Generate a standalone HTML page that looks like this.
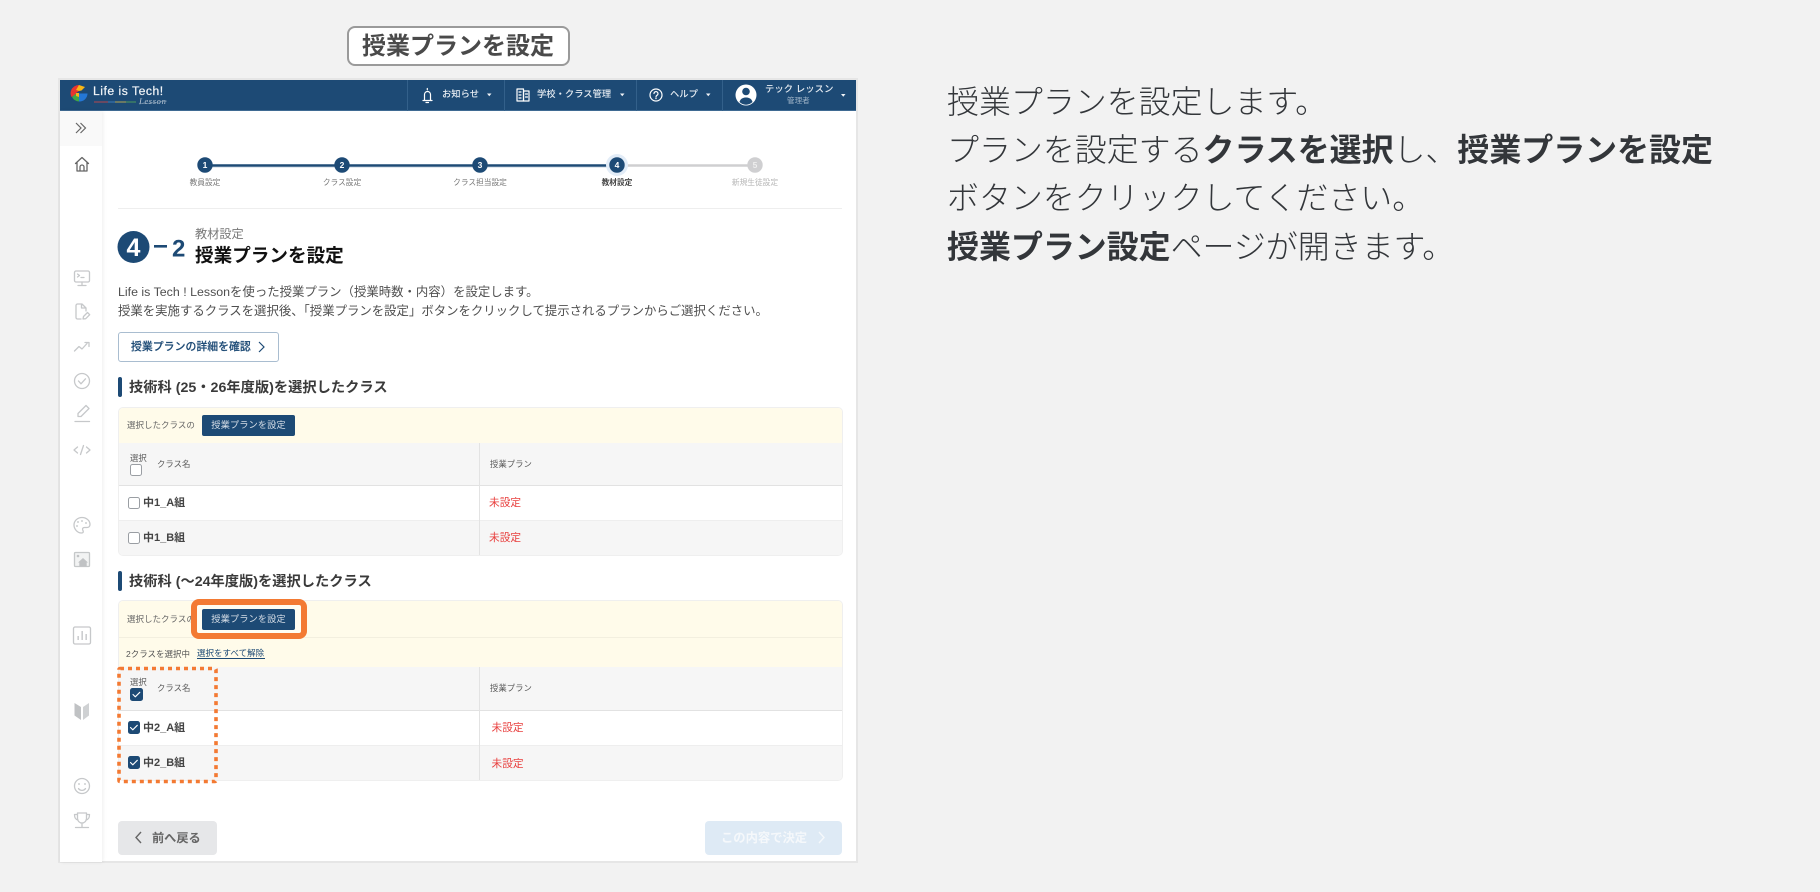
<!DOCTYPE html>
<html lang="ja"><head><meta charset="utf-8"><title>授業プランを設定</title>
<style>
*{box-sizing:border-box}
html,body{margin:0;padding:0}
body{width:1820px;height:892px;position:relative;overflow:hidden;background:#f2f2f2;font-family:"Liberation Sans","Noto Sans CJK JP",sans-serif;color:#333}
.t{position:absolute;white-space:nowrap;line-height:20px;height:20px}
.b{position:absolute}
b{font-weight:700}
.hd{color:#e6ecf2;font-size:9.3px;font-weight:500}
.step{font-size:7.7px;color:#777;transform:translateX(-50%)}
.th{font-size:8.4px;color:#5c5c5c}
.red{font-size:10.7px;color:#e8403f}
.row{font-size:11px;font-weight:700;color:#444}
.btn{position:absolute;background:#1d4a75;border-radius:2px;color:#d5dde6;font-size:9.3px;text-align:center;line-height:21px;white-space:nowrap}
.cb{position:absolute;width:12px;height:12px;border:1px solid #9a9ea3;border-radius:2.5px;background:#fff}
.cbc{position:absolute;width:12.5px;height:12.5px;border-radius:2.5px;background:#1d4a75}
.sec{font-size:14.25px;font-weight:700;color:#3a3a3a}
.bar{position:absolute;left:118px;width:4px;height:20px;background:#1d4a75;border-radius:2px}
.msg{left:947px;font-size:31.95px;font-weight:300;color:#33363a;line-height:48px;height:48px}
.msg b{font-weight:700}
</style></head><body>

<!-- pill -->
<div class="b" style="left:347px;top:26px;width:223px;height:40px;background:#fff;border:2px solid #9a9a9a;border-radius:8px"></div>
<div class="t" style="left:362px;top:37px;font-size:24px;font-weight:700;color:#4a4a4a">授業プランを設定</div>

<!-- right text -->
<div class="t msg" style="top:78px">授業プランを設定します。</div>
<div class="t msg" style="top:126px">プランを設定する<b>クラスを選択</b>し、<b>授業プランを設定</b></div>
<div class="t msg" style="top:174px">ボタンをクリックしてください。</div>
<div class="t msg" style="top:223px"><b>授業プラン設定</b>ページが開きます。</div>

<!-- window -->
<div class="b" style="left:58px;top:78px;width:800px;height:785px;background:#fff;border:2px solid #e6e6e6"></div>
<div class="b" style="left:60px;top:80px;width:796px;height:31px;background:#1d4a75;border-bottom:1px solid #3f6a92"></div>
<div class="b" style="left:407px;top:80px;width:1px;height:31px;background:#33608a"></div>
<div class="b" style="left:504px;top:80px;width:1px;height:31px;background:#33608a"></div>
<div class="b" style="left:636px;top:80px;width:1px;height:31px;background:#33608a"></div>
<div class="b" style="left:722px;top:80px;width:1px;height:31px;background:#33608a"></div>

<!-- sidebar -->
<div class="b" style="left:60px;top:111px;width:42px;height:751px;background:#fff;box-shadow:1px 0 4px rgba(0,0,0,.07)"></div>
<div class="b" style="left:60px;top:111px;width:42px;height:35px;background:#f9f9f9"></div>

<!-- header text -->
<div class="t" style="left:93px;top:81px;font-size:12.2px;font-weight:400;color:#f2f5f8;letter-spacing:.5px;-webkit-text-stroke:.2px #f2f5f8">Life is Tech!</div>
<div class="t" style="left:139px;top:91px;font-size:8.6px;font-style:italic;color:#b9c8d6;font-family:'Liberation Serif',serif;letter-spacing:.6px">Lesson</div>
<div class="t hd" style="left:442px;top:84px">お知らせ</div>
<div class="t hd" style="left:537px;top:84px">学校・クラス管理</div>
<div class="t hd" style="left:670px;top:84px">ヘルプ</div>
<div class="t hd" style="left:765px;top:79px;letter-spacing:.1px">テック レッスン</div>
<div class="t" style="left:787px;top:91px;font-size:7.6px;color:#9db2c6">管理者</div>

<!-- stepper labels -->
<div class="t step" style="left:205px;top:173px">教員設定</div>
<div class="t step" style="left:342px;top:173px">クラス設定</div>
<div class="t step" style="left:480px;top:173px">クラス担当設定</div>
<div class="t step" style="left:617px;top:173px;font-weight:700;color:#444">教材設定</div>
<div class="t step" style="left:755px;top:173px;color:#b5b5b5">新規生徒設定</div>
<div class="b" style="left:118px;top:208px;width:724px;height:1px;background:#eeeeee"></div>

<!-- title -->
<div class="t" style="left:195px;top:224px;font-size:12.2px;color:#777">教材設定</div>
<div class="t" style="left:195px;top:246px;font-size:18.6px;font-weight:700;color:#111">授業プランを設定</div>
<div class="t" style="left:118px;top:282px;font-size:12.4px;color:#4f4f4f">Life is Tech ! Lessonを使った授業プラン（授業時数・内容）を設定します。</div>
<div class="t" style="left:118px;top:301px;font-size:12.4px;color:#4f4f4f">授業を実施するクラスを選択後、「授業プランを設定」ボタンをクリックして提示されるプランからご選択ください。</div>

<div class="b" style="left:118px;top:332px;width:161px;height:30px;border:1px solid #a9bdd0;border-radius:3px;background:#fff"></div>
<div class="t" style="left:131px;top:337px;font-size:10.9px;font-weight:500;color:#1d4a75;-webkit-text-stroke:.15px #1d4a75">授業プランの詳細を確認</div>

<!-- section 1 -->
<div class="bar" style="top:377px"></div>
<div class="t sec" style="left:129px;top:378px">技術科 (25・26年度版)を選択したクラス</div>

<div class="b" style="left:118px;top:407px;width:725px;height:149px;border:1px solid #efefef;border-radius:5px;overflow:hidden;background:#fff">
  <div class="b" style="left:0;top:0;width:100%;height:35px;background:#fffbea"></div>
  <div class="b" style="left:0;top:35px;width:100%;height:43px;background:#f6f6f6;border-bottom:1px solid #e2e2e2"></div>
  <div class="b" style="left:0;top:112px;width:100%;height:36px;background:#f6f6f6;border-top:1px solid #eee"></div>
  <div class="b" style="left:360px;top:35px;width:1px;height:113px;background:#e3e3e3"></div>
</div>
<div class="t" style="left:127px;top:415px;font-size:8.5px;color:#666">選択したクラスの</div>
<div class="btn" style="left:202px;top:415px;width:93px;height:21px">授業プランを設定</div>
<div class="t th" style="left:130px;top:448px">選択</div>
<div class="cb" style="left:130px;top:464px"></div>
<div class="t th" style="left:157px;top:454px">クラス名</div>
<div class="t th" style="left:490px;top:454px">授業プラン</div>
<div class="cb" style="left:128px;top:497px"></div>
<div class="t row" style="left:143px;top:493px">中1_A組</div>
<div class="t red" style="left:489px;top:493px">未設定</div>
<div class="cb" style="left:128px;top:532px"></div>
<div class="t row" style="left:143px;top:528px">中1_B組</div>
<div class="t red" style="left:489px;top:528px">未設定</div>

<!-- section 2 -->
<div class="bar" style="top:571px"></div>
<div class="t sec" style="left:129px;top:572px">技術科 (〜24年度版)を選択したクラス</div>

<div class="b" style="left:118px;top:600px;width:725px;height:181px;border:1px solid #efefef;border-radius:5px;overflow:hidden;background:#fff">
  <div class="b" style="left:0;top:0;width:100%;height:66px;background:#fffbea"></div>
  <div class="b" style="left:0;top:36px;width:100%;height:1px;background:#f3efdf"></div>
  <div class="b" style="left:0;top:66px;width:100%;height:44px;background:#f6f6f6;border-bottom:1px solid #e2e2e2"></div>
  <div class="b" style="left:0;top:144px;width:100%;height:36px;background:#f6f6f6;border-top:1px solid #eee"></div>
  <div class="b" style="left:360px;top:66px;width:1px;height:114px;background:#e3e3e3"></div>
</div>
<div class="t" style="left:127px;top:609px;font-size:8.5px;color:#666">選択したクラスの</div>
<div class="b" style="left:191px;top:599px;width:116px;height:40px;border:6px solid #f37a33;border-radius:8px;background:#fffdf2"></div>
<div class="btn" style="left:202px;top:609px;width:93px;height:21px">授業プランを設定</div>
<div class="t" style="left:126px;top:644px;font-size:8.5px;color:#555">2クラスを選択中</div>
<div class="t" style="left:197px;top:643px;font-size:8.5px;color:#1d4a75">選択をすべて解除</div>
<div class="b" style="left:197px;top:658px;width:68px;height:1px;background:#1d4a75"></div>
<div class="t th" style="left:130px;top:672px">選択</div>
<div class="cbc" style="left:130px;top:688px"></div>
<div class="t th" style="left:157px;top:678px">クラス名</div>
<div class="t th" style="left:490px;top:678px">授業プラン</div>
<div class="cbc" style="left:127.5px;top:721px"></div>
<div class="t row" style="left:143px;top:718px">中2_A組</div>
<div class="t red" style="left:491.5px;top:718px">未設定</div>
<div class="cbc" style="left:127.5px;top:756px"></div>
<div class="t row" style="left:143px;top:753px">中2_B組</div>
<div class="t red" style="left:491.5px;top:754px">未設定</div>

<!-- footer buttons -->
<div class="b" style="left:118px;top:821px;width:99px;height:34px;background:#e6e7e9;border-radius:4px"></div>
<div class="t" style="left:152px;top:828px;font-size:12.2px;font-weight:700;color:#666">前へ戻る</div>
<div class="b" style="left:705px;top:821px;width:137px;height:34px;background:#deeaf5;border-radius:4px"></div>
<div class="t" style="left:721px;top:828px;font-size:12.3px;font-weight:700;color:#f5f8fb">この内容で決定</div>

<!-- vector overlay -->
<svg class="b" style="left:0;top:0" width="1820" height="892" viewBox="0 0 1820 892" fill="none">
  <!-- logo -->
  <g transform="translate(1 0)">
  <path d="M78 85a8.5 8.5 0 0 0-8 5.5l5 2.5 3-2z" fill="#e8352f"/>
  <path d="M70 90.500a8.500 8.500 0 0 0 .5 6.500l5-2.500v-1.500z" fill="#e8352f"/>
  <path d="M78 85l6 2-3.500 3.500-2.500 .5-3-1z" fill="#f7b515"/>
  <path d="M71 97a8.500 8.500 0 0 0 7 4.500v-7l-3-1z" fill="#3fa648"/>
  <path d="M78 101.500a8 8 0 0 0 8.500-8h-8.500z" fill="#2477d6"/>
  <path d="M78 93h-3v3l3 1z" fill="#f7b515"/>
  </g>
  <path d="M94 102h14" stroke="#b5484f"/><path d="M108 102h14" stroke="#3d79b8"/><path d="M115 102h11" stroke="#b8a651"/><path d="M126 102h10" stroke="#4f9a5c"/>
  <path d="M139 104q14-1 28-3" stroke="#8fa6bb" stroke-width=".5"/>

  <!-- header icons -->
  <g stroke="#fff" stroke-width="1.200" stroke-linejoin="round" stroke-linecap="round">
    <path d="M423 100.500h9M424.500 100.500v-6a3 3 0 0 1 6 0v6" />
    <path d="M426 102.500h2.500M427.300 88.500v1.300"/>
    <rect x="517" y="89" width="6.500" height="12"/><rect x="523.500" y="91" width="5.500" height="10"/>
    <path d="M519 92h2M519 95h2M519 98h2M525.500 94h2M525.500 97h2"/>
    <circle cx="656" cy="95" r="6"/>
    <path d="M654 93.500a2 2 0 1 1 3 1.800c-.8.5-1 1-1 1.700"/>
  </g>
  <circle cx="656" cy="98.500" r=".7" fill="#fff"/>
  <g fill="#f0f3f6">
    <path d="M487 93.500h4.500l-2.250 2.700z"/><path d="M620 93.500h4.500l-2.250 2.700z"/><path d="M706 93.500h4.500l-2.250 2.700z"/><path d="M841 94h4.500l-2.250 2.700z"/>
  </g>
  <circle cx="746" cy="95" r="10.500" fill="#fff"/>
  <circle cx="746" cy="91.500" r="3.800" fill="#1d4a75"/>
  <path d="M739.500 102c.8-3.200 3.500-4.500 6.500-4.500s5.700 1.300 6.500 4.500a9 9 0 0 1-13 0z" fill="#1d4a75"/>

  <!-- sidebar icons -->
  <path d="M76 123l5 5-5 5M80.500 123l5 5-5 5" stroke="#666" stroke-width="1.200"/>
  <path d="M75.500 163.500l6.500-6 6.500 6M77 162.500v8.500h10v-8.500M80 171v-4a2 2 0 0 1 4 0v4" stroke="#666" stroke-width="1.300" stroke-linejoin="round" stroke-linecap="round"/>
  <g stroke="#c6c8ca" stroke-width="1.300" stroke-linecap="round" stroke-linejoin="round">
    <rect x="74.500" y="271" width="15" height="11" rx="1.500"/><path d="M82 282v3M78 285.500h8M77.500 274l2 1.500-2 1.500M81 277.500h3"/>
    <path d="M81 319h-3.500a1.500 1.500 0 0 1-1.500-1.500v-12a1.500 1.500 0 0 1 1.500-1.500h4.500l4 4v3M81.500 304v4h4.500"/>
    <path d="M83 319l.5-2.500 4-4 2.200 2.200-4 4z"/>
    <path d="M74.500 351l4.500-4.500 3 2.500 5-5.500"/><path d="M85 342.500h4v4" />
    <circle cx="82" cy="381" r="7.500"/><path d="M78.500 381l2.500 2.800 4.500-5"/>
    <path d="M78 416.500v-3l8-8 3 3-8 8z"/><path d="M75 421.500h14.500"/>
    <path d="M77.500 447l-3.500 3 3.500 3M86.500 447l3.500 3-3.500 3M83.500 445.500l-3 9"/>
    <path d="M82 517.500c-4.500 0-8 3.400-8 7.500s3.500 8 7.500 8c2.200 0 2-1.800 1.300-2.800-.8-1.300 0-2.700 1.700-2.700h2.500c1.500 0 3-1 3-3 0-3.800-3.500-7-8-7z"/>
    <rect x="74.500" y="552.500" width="15" height="14" rx="1"/>
    <rect x="73.500" y="627" width="17" height="17" rx="1.500"/>
    <circle cx="82" cy="786" r="7.500"/><path d="M78.500 788.500c1.500 2.500 5.500 2.500 7 0"/>
    <path d="M77.500 813h9v5.500a4.500 4.500 0 0 1-9 0zM77.500 814.500h-3c0 3.500 1 5 3.500 5.500M86.500 814.500h3c0 3.500-1 5-3.500 5.500M82 823v4M75.500 827.500h13"/>
  </g>
  <g fill="#c0c2c4">
    <circle cx="78" cy="522" r=".9"/><circle cx="82" cy="521" r=".9"/><circle cx="86" cy="523" r=".9"/><circle cx="77" cy="526" r=".9"/>
    <rect x="74.500" y="552.500" width="15" height="14" fill-opacity=".2"/>
    <circle cx="78" cy="556" r="1.300"/>
    <path d="M83 558l5 4.500h-1.300v4h-7.400v-4h-1.300z"/>
    <rect x="77.500" y="636" width="1.300" height="4"/><rect x="81.500" y="631" width="1.300" height="9"/><rect x="85.500" y="634" width="1.300" height="6"/>
    <path d="M74.500 703l6.500 4v13l-6.500-4.500z"/><path d="M83 707l6-4v12.500l-6 4.500z" fill="#cfd1d3"/>
    <circle cx="79" cy="784" r=".9"/><circle cx="85" cy="784" r=".9"/>
  </g>

  <!-- stepper -->
  <path d="M205 165.500H617" stroke="#1d4a75" stroke-width="2.400"/>
  <path d="M205 167H617" stroke="#8ba4bc" stroke-width=".6"/>
  <path d="M617 165.500H755" stroke="#cfcfd1" stroke-width="2.400"/>
  <circle cx="617" cy="165" r="11" fill="#e2ecf7"/>
  <circle cx="205" cy="165" r="7.700" fill="#1d4a75"/>
  <circle cx="342" cy="165" r="7.700" fill="#1d4a75"/>
  <circle cx="480" cy="165" r="7.700" fill="#1d4a75"/>
  <circle cx="617" cy="165" r="7.700" fill="#1d4a75"/>
  <circle cx="755" cy="165" r="7.700" fill="#cfcfd1"/>
  <g font-family="Liberation Sans" font-size="8.500" font-weight="700" text-anchor="middle" fill="#fff">
    <text x="205" y="168">1</text><text x="342" y="168">2</text><text x="480" y="168">3</text><text x="617" y="168">4</text><text x="755" y="168" fill="#eee">5</text>
  </g>

  <!-- title number -->
  <circle cx="133.500" cy="247" r="16" fill="#1d4a75"/>
  <text x="133.500" y="256" font-family="Liberation Sans" font-size="25" font-weight="700" fill="#fff" text-anchor="middle">4</text>
  <rect x="154" y="245" width="13" height="2.600" fill="#1d4a75"/>
  <text x="172" y="256.500" font-family="Liberation Sans" font-size="24" font-weight="700" fill="#1d4a75">2</text>

  <!-- chevrons -->
  <path d="M259 342l5 5-5 5" stroke="#1d4a75" stroke-width="1.200"/>
  <path d="M141 832l-5 5.500 5 5.500" stroke="#666" stroke-width="1.400"/>
  <path d="M819 832l5 5.500-5 5.500" stroke="#f5f8fb" stroke-width="1.400"/>

  <!-- checks -->
  <g stroke="#fff" stroke-width="1.100" stroke-linecap="round" stroke-linejoin="round">
    <path d="M133 694.500l2.300 2.300 4.500-4.500"/><path d="M130.500 727.500l2.300 2.300 4.500-4.500"/><path d="M130.500 762.500l2.300 2.300 4.500-4.500"/>
  </g>

  <!-- dotted highlight -->
  <rect x="119" y="668.500" width="97" height="113" rx="1" stroke="#f37a33" stroke-width="3.600" stroke-dasharray="4 4"/>
</svg>
</body></html>
